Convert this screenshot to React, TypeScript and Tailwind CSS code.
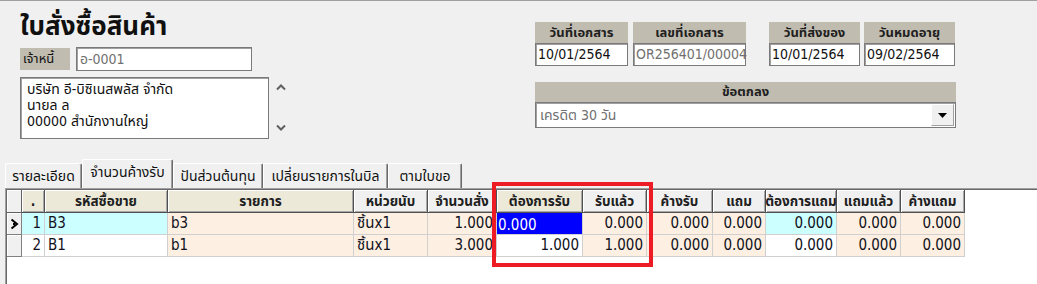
import React from "react";

type Col = { label: string; w: string; beige?: boolean };

const cols: Col[] = [
  { label: ".", w: "w-[23px]", beige: true },
  { label: "รหัสซื้อขาย", w: "w-[123px]", beige: true },
  { label: "รายการ", w: "w-[186px]", beige: true },
  { label: "หน่วยนับ", w: "w-[74px]" },
  { label: "จำนวนสั่ง", w: "w-[69px]" },
  { label: "ต้องการรับ", w: "w-[86px]", beige: true },
  { label: "รับแล้ว", w: "w-[64px]" },
  { label: "ค้างรับ", w: "w-[66px]" },
  { label: "แถม", w: "w-[53px]" },
  { label: "ต้องการแถม", w: "w-[71px]" },
  { label: "แถมแล้ว", w: "w-[64px]" },
  { label: "ค้างแถม", w: "w-[64px]" },
];

type Cell = { t: string; bg: "c" | "p" | "w" | "sel"; a: "l" | "r" };

const rows: Cell[][] = [
  [
    { t: "1", bg: "c", a: "r" },
    { t: "B3", bg: "c", a: "l" },
    { t: "b3", bg: "p", a: "l" },
    { t: "ชิ้นx1", bg: "p", a: "l" },
    { t: "1.000", bg: "p", a: "r" },
    { t: "0.000", bg: "sel", a: "l" },
    { t: "0.000", bg: "p", a: "r" },
    { t: "0.000", bg: "p", a: "r" },
    { t: "0.000", bg: "p", a: "r" },
    { t: "0.000", bg: "c", a: "r" },
    { t: "0.000", bg: "p", a: "r" },
    { t: "0.000", bg: "p", a: "r" },
  ],
  [
    { t: "2", bg: "w", a: "r" },
    { t: "B1", bg: "w", a: "l" },
    { t: "b1", bg: "p", a: "l" },
    { t: "ชิ้นx1", bg: "p", a: "l" },
    { t: "3.000", bg: "p", a: "r" },
    { t: "1.000", bg: "w", a: "r" },
    { t: "1.000", bg: "p", a: "r" },
    { t: "0.000", bg: "p", a: "r" },
    { t: "0.000", bg: "p", a: "r" },
    { t: "0.000", bg: "w", a: "r" },
    { t: "0.000", bg: "p", a: "r" },
    { t: "0.000", bg: "p", a: "r" },
  ],
];

const bgClass = {
  c: "bg-[#ccffff]",
  p: "bg-[#fdf0e2]",
  w: "bg-white",
  sel: "bg-[#0000ff]",
};

function DateBox({ label, value, w, gray }: { label: string; value: string; w: string; gray?: boolean }) {
  return (
    <div className={`flex flex-col ${w}`}>
      <div className="h-[21px] bg-[#c0bcb0] flex items-center justify-center text-[13px] font-bold text-[#202020]">
        {label}
      </div>
      <div
        className={`h-[23px] bg-white border border-[#7a7a7a] shadow-[inset_1px_1px_0_#a0a0a0] pl-[2px] flex items-center text-[14px] ${
          gray ? "text-[#707070]" : "text-[#101010]"
        }`}
      >
        {value}
      </div>
    </div>
  );
}

function Tab({ label, active, w }: { label: string; active?: boolean; w: string }) {
  return (
    <div
      className={`${w} ${
        active ? "h-[29px] pb-[3px] z-10" : "h-[25px]"
      } flex items-center justify-center text-[14px] text-[#101010] border-l border-t border-white border-r border-r-[#6a6a6a] shadow-[inset_-1px_0_0_#a0a0a0] rounded-t-[2px] bg-[#f0f0f0]`}
    >
      {label}
    </div>
  );
}

function Indicator({ arrow }: { arrow?: boolean }) {
  return (
    <div className="w-[15px] h-[22px] bg-[#f0f0f0] border-r border-b border-[#808080] shadow-[inset_1px_1px_0_#ffffff] flex items-center justify-center">
      {arrow && (
        <svg width="9" height="12" viewBox="0 0 9 12">
          <path d="M1.5 1.5 L7 6 L1.5 10.5" fill="none" stroke="#000" strokeWidth="2" />
          <rect x="3" y="5" width="2" height="2" fill="#000" />
        </svg>
      )}
    </div>
  );
}

export default function App() {
  return (
    <div className="w-[1037px] h-[284px] overflow-hidden bg-[#f0f0f0] border-t border-[#a0a0a0] relative flex flex-col font-['Tahoma','DejaVu_Sans_Condensed','Noto_Sans_Thai','DejaVu_Sans',sans-serif] text-[#101010]">
      {/* top section */}
      <div className="flex h-[156px] shrink-0">
        <div className="w-[290px] pl-[20px] flex flex-col shrink-0">
          <div className="h-[46px] pt-[8px] text-[26px] font-bold leading-[34px] text-[#101010]">ใบสั่งซื้อสินค้า</div>
          <div className="flex items-start">
            <div className="w-[50px] h-[22px] mt-[1px] bg-[#c0bcb0] text-[13px] pl-[3px] flex items-center">เจ้าหนี้</div>
            <div className="ml-[6px] w-[176px] h-[24px] bg-white border border-[#7a7a7a] shadow-[inset_1px_1px_0_#a0a0a0] text-[14px] text-[#707070] pl-[3px] flex items-center">
              อ-0001
            </div>
          </div>
          <div className="flex mt-[6px]">
            <div className="w-[249px] h-[62px] bg-white border border-[#7a7a7a] shadow-[inset_1px_1px_0_#a0a0a0] px-[6px] pt-[3px] text-[14px] leading-[16px] text-[#101010]">
              <div>บริษัท อี-บิซิเนสพลัส จำกัด</div>
              <div>นายล ล</div>
              <div>00000 สำนักงานใหญ่</div>
            </div>
            <div className="ml-[7px] w-[10px] relative">
              <svg className="absolute left-0 top-[7px]" width="10" height="7" viewBox="0 0 10 7">
                <path d="M1 5.5 L5 1.5 L9 5.5" fill="none" stroke="#606060" strokeWidth="2" />
              </svg>
              <svg className="absolute left-0 top-[47px]" width="10" height="7" viewBox="0 0 10 7">
                <path d="M1 1.5 L5 5.5 L9 1.5" fill="none" stroke="#606060" strokeWidth="2" />
              </svg>
            </div>
          </div>
        </div>
        <div className="ml-[245px] pt-[21px] flex flex-col">
          <div className="flex">
            <DateBox label="วันที่เอกสาร" value="10/01/2564" w="w-[93px]" />
            <div className="ml-[5px]">
              <DateBox label="เลขที่เอกสาร" value="OR256401/00004" w="w-[113px]" gray />
            </div>
            <div className="ml-[23px]">
              <DateBox label="วันที่ส่งของ" value="10/01/2564" w="w-[91px]" />
            </div>
            <div className="ml-[4px]">
              <DateBox label="วันหมดอายุ" value="09/02/2564" w="w-[91px]" />
            </div>
          </div>
          <div className="mt-[16px] w-[421px] flex flex-col">
            <div className="h-[20px] bg-[#c0bcb0] flex items-center justify-center text-[13px] font-bold text-[#202020]">ข้อตกลง</div>
            <div className="h-[26px] bg-white border border-[#7a7a7a] shadow-[inset_1px_1px_0_#a0a0a0] flex items-center">
              <div className="flex-1 pl-[4px] text-[14px] text-[#707070]">เครดิต 30 วัน</div>
              <div className="w-[23px] h-[22px] mr-[1px] bg-[#f0f0f0] border-l border-t border-white border-r border-b border-r-[#a0a0a0] border-b-[#a0a0a0] flex items-center justify-center">
                <svg width="9" height="5" viewBox="0 0 9 5">
                  <path d="M0 0 H9 L4.5 5 Z" fill="#000" />
                </svg>
              </div>
            </div>
          </div>
        </div>
      </div>

      {/* tabs */}
      <div className="h-[31px] shrink-0 flex items-end pl-[5px]">
        <Tab label="รายละเอียด" w="w-[77px]" />
        <Tab label="จำนวนค้างรับ" w="w-[91px]" active />
        <Tab label="ปันส่วนต้นทุน" w="w-[90px]" />
        <Tab label="เปลี่ยนรายการในบิล" w="w-[125px]" />
        <Tab label="ตามใบขอ" w="w-[74px]" />
      </div>

      {/* grid */}
      <div className="ml-[5px] flex-1 border-l border-t border-[#a0a0a0]">
        <div className="h-full border-l border-t border-[#696969] bg-white">
          <div className="flex">
            <div className="w-[15px] h-[23px] bg-[#f0f0f0] border-r border-b border-[#606060] shadow-[inset_1px_1px_0_#ffffff]" />
            {cols.map((c, i) => (
              <div
                key={i}
                className={`${c.w} h-[23px] ${c.beige ? "bg-[#ece9d8]" : "bg-[#f0f0f0]"} border-r border-b border-[#505050] shadow-[inset_1px_1px_0_#ffffff,inset_-1px_-1px_0_#a8a8a8] flex items-center justify-center text-[13.5px] font-bold text-[#202020] whitespace-nowrap overflow-hidden`}
              >
                {c.label}
              </div>
            ))}
          </div>
          {rows.map((r, ri) => (
            <div key={ri} className="flex">
              <Indicator arrow={ri === 0} />
              {r.map((cell, ci) => (
                <div
                  key={ci}
                  className={`${cols[ci].w} h-[22px] ${bgClass[cell.bg]} border-r border-b border-[#d0d0d0] flex ${
                    cell.bg === "sel" ? "items-start pt-[1px] pl-[1px] text-white" : "items-center px-[3px] text-[#101020]"
                  } ${cell.a === "r" ? "justify-end" : "justify-start"} text-[15px] whitespace-nowrap overflow-hidden`}
                >
                  {cell.t}
                </div>
              ))}
            </div>
          ))}
        </div>
      </div>

      {/* annotation */}
      <div className="absolute left-[492px] top-[181px] w-[161px] h-[85px] border-4 border-[#ed1c24]" />
    </div>
  );
}
